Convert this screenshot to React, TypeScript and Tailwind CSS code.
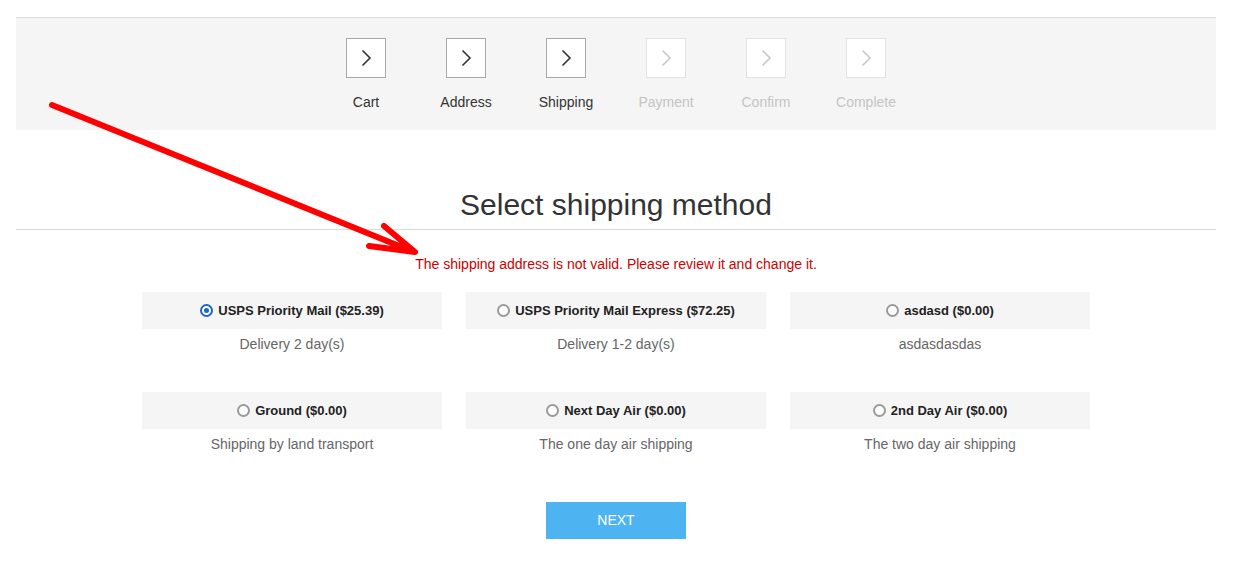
import React, { useState } from "react";

type Method = {
  id: string;
  name: string;
  desc: string;
};

const steps = [
  { label: "Cart", done: true },
  { label: "Address", done: true },
  { label: "Shipping", done: true },
  { label: "Payment", done: false },
  { label: "Confirm", done: false },
  { label: "Complete", done: false },
];

const methods: Method[] = [
  { id: "usps", name: "USPS Priority Mail ($25.39)", desc: "Delivery 2 day(s)" },
  { id: "express", name: "USPS Priority Mail Express ($72.25)", desc: "Delivery 1-2 day(s)" },
  { id: "asd", name: "asdasd ($0.00)", desc: "asdasdasdas" },
  { id: "ground", name: "Ground ($0.00)", desc: "Shipping by land transport" },
  { id: "nextday", name: "Next Day Air ($0.00)", desc: "The one day air shipping" },
  { id: "2day", name: "2nd Day Air ($0.00)", desc: "The two day air shipping" },
];

const Chevron = ({ done }: { done: boolean }) => (
  <svg width="12" height="18" viewBox="0 0 12 18" fill="none">
    <path
      d="M2.5 1.5 L10 9 L2.5 16.5"
      stroke={done ? "#333" : "#c8c8c8"}
      strokeWidth="1.6"
    />
  </svg>
);

const Radio = ({ checked }: { checked: boolean }) => (
  <span
    className={`flex h-[13px] w-[13px] items-center justify-center rounded-full border-2 ${
      checked ? "border-[#1a66c9]" : "border-[#9a9a9a]"
    } bg-white`}
  >
    {checked && <span className="h-[5px] w-[5px] rounded-full bg-[#1a66c9]" />}
  </span>
);

const App = () => {
  const [selected, setSelected] = useState("usps");

  return (
    <div className="relative min-h-[587px] bg-white font-['Liberation_Sans',Arial,sans-serif] text-[#333]">
      <div className="ml-4 w-[1200px] pt-[17px]">
        <div className="border-t border-[#dcdcdc] bg-[#f5f5f5] pt-5 pb-[18px]">
          <div className="flex justify-center">
            {steps.map((s) => (
              <div key={s.label} className="flex w-[100px] flex-col items-center">
                <div
                  className={`flex h-10 w-10 items-center justify-center border bg-white ${
                    s.done ? "border-[#a8a8a8]" : "border-[#e2e2e2]"
                  }`}
                >
                  <Chevron done={s.done} />
                </div>
                <div
                  className={`mt-[14px] text-[14px] leading-5 ${
                    s.done ? "text-[#333]" : "text-[#c4c4c4]"
                  }`}
                >
                  {s.label}
                </div>
              </div>
            ))}
          </div>
        </div>

        <h1 className="mt-[57px] text-center text-[30px] leading-9 text-[#333]">
          Select shipping method
        </h1>
        <div className="mt-[6px] border-t border-[#dcdcdc]" />

        <p className="mt-[24px] text-center text-[14px] leading-5 text-[#cc0000]">
          The shipping address is not valid. Please review it and change it.
        </p>

        <div className="mx-auto mt-[18px] grid w-[948px] grid-cols-3 gap-x-6 gap-y-[25px]">
          {methods.map((m) => (
            <div key={m.id} className="h-[75px]">
              <button
                onClick={() => setSelected(m.id)}
                className="flex h-[37px] w-full items-center justify-center gap-[5px] bg-[#f5f5f5]"
              >
                <Radio checked={selected === m.id} />
                <span className="text-[13px] font-bold text-[#222]">{m.name}</span>
              </button>
              <div className="mt-[5px] text-center text-[14px] leading-5 text-[#666]">
                {m.desc}
              </div>
            </div>
          ))}
        </div>

        <div className="mt-[35px] flex justify-center">
          <button className="h-[37px] w-[140px] bg-[#4eb3f1] text-[14px] text-white">
            NEXT
          </button>
        </div>
      </div>

      <svg
        className="pointer-events-none absolute left-0 top-0"
        width="1235"
        height="587"
        viewBox="0 0 1235 587"
        fill="none"
      >
        <path
          d="M52 105 L414 252 M384 226 L415 252 L369 246"
          stroke="#ff0000"
          strokeWidth="6"
          strokeLinecap="round"
          strokeLinejoin="round"
        />
      </svg>
    </div>
  );
};

export default App;
